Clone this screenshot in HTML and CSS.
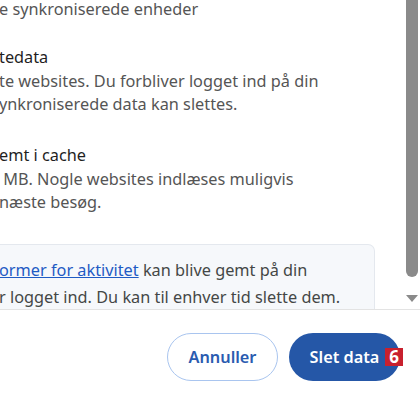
FILE: index.html
```html
<!DOCTYPE html>
<html>
<head>
<link rel="stylesheet" href="styles.css">
</head>
<body>

<div class="dialog">
    <div class="scroll-area">
        <div class="content">
            <div class="item">
                <div class="desc first">e synkroniserede enheder</div>
            </div>
            <div class="item">
                <div class="title">tedata</div>
                <div class="desc">te websites. Du forbliver logget ind på din<br>ynkroniserede data kan slettes.</div>
            </div>
            <div class="item">
                <div class="title">emt i cache</div>
                <div class="desc"> MB. Nogle websites indlæses muligvis<br>næste besøg.</div>
            </div>
            <div class="info-box">
                <a href="#" class="link">ormer for aktivitet</a> kan blive gemt på din<br>r logget ind. Du kan til enhver tid slette dem.
            </div>
        </div>
        <div class="scrollbar">
            <div class="thumb"></div>
            <div class="arrow-down"></div>
        </div>
    </div>

    <div class="footer">
        <button class="btn btn-cancel">Annuller</button>
        <button class="btn btn-primary">Slet data<span class="badge">6</span></button>
    </div>
</div>

</body>
</html>
```

FILE: styles.css
```css
body {
    margin: 0;
    background-color: #ffffff;
    font-family: "Noto Sans", "Open Sans", sans-serif;
    font-size: 16.3px;
    color: #1f1f1f;
    overflow: hidden;
}

.dialog {
    width: 420px;
    height: 394px;
    display: flex;
    flex-direction: column;
}

.scroll-area {
    height: 309px;
    display: flex;
    border-bottom: 1px solid #e3e3e3;
    overflow: hidden;
}

.content {
    width: 376px;
    margin-left: -1px;
    margin-right: 29px;
    display: flex;
    flex-direction: column;
    gap: 27px;
}

.title {
    line-height: 24px;
    color: #1f1f1f;
    white-space: pre;
}

.desc {
    margin-top: 1px;
    line-height: 23px;
    color: #555555;
    white-space: pre;
}

/* list is scrolled a little, first line sits at the top edge */
.desc.first {
    margin-top: 0;
    line-height: 18px;
    padding-top: 0;
}

.info-box {
    margin-top: 3px;
    padding: 12px 0 12px 0;
    background-color: #f6f8fb;
    border: 1px solid #e4e8ee;
    border-left: none;
    border-radius: 0 7px 7px 0;
    line-height: 27px;
    color: #444746;
    white-space: nowrap;
}

.link {
    color: #1f5bc4;
    text-decoration: underline;
}

/* fake scrollbar */
.scrollbar {
    width: 16px;
    display: flex;
    flex-direction: column;
    align-items: center;
}

.thumb {
    width: 12px;
    height: 277px;
    background-color: #8a8a8a;
    border-radius: 0 0 6px 6px;
}

.arrow-down {
    margin-top: 18px;
    width: 0;
    height: 0;
    border-left: 6px solid transparent;
    border-right: 6px solid transparent;
    border-top: 7px solid #8a8a8a;
}

.footer {
    display: flex;
    justify-content: flex-end;
    gap: 11px;
    padding: 23px 20px 0 0;
}

.btn {
    position: relative;
    width: 111px;
    height: 48px;
    border-radius: 24px;
    font-family: "Noto Sans", "Open Sans", sans-serif;
    font-size: 16.3px;
    font-weight: 600;
    cursor: default;
}

.btn-cancel {
    background-color: #ffffff;
    color: #2a5bb0;
    border: 1px solid #a9c5ef;
}

.btn-primary {
    background-color: #2557a7;
    color: #ffffff;
    border: none;
}

.badge {
    position: absolute;
    left: 96px;
    top: 15px;
    width: 18px;
    height: 18px;
    background-color: #c8202e;
    color: #ffffff;
    font-size: 17px;
    font-weight: 700;
    line-height: 18px;
    text-align: center;
}
```
